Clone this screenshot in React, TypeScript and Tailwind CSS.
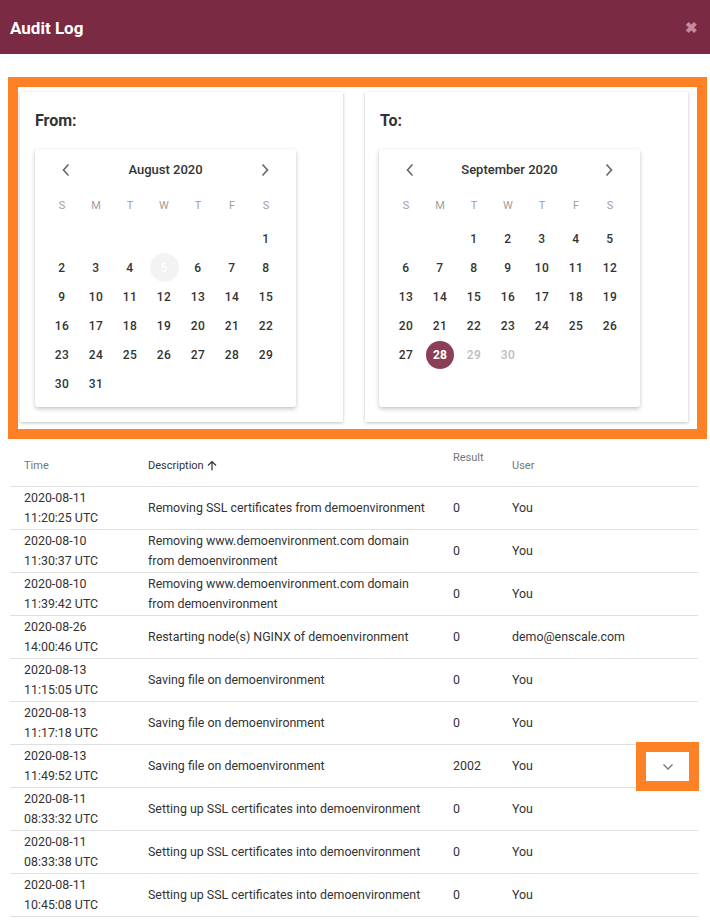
import React from "react";

const weekdays = ["S", "M", "T", "W", "T", "F", "S"];

type CalProps = {
  title: string;
  offset: number;
  days: number;
  ghost?: number;
  selected?: number;
  disabledFrom?: number;
};

function Chevron({ dir }: { dir: "left" | "right" }) {
  return (
    <svg width="10" height="14" viewBox="0 0 10 14" fill="none">
      <path
        d={dir === "left" ? "M7.5 1.5 2.5 7l5 5.5" : "M2.5 1.5 7.5 7l-5 5.5"}
        stroke="#666"
        strokeWidth="1.6"
      />
    </svg>
  );
}

function Calendar({ title, offset, days, ghost, selected, disabledFrom }: CalProps) {
  const cells: (number | null)[] = [];
  for (let i = 0; i < offset; i++) cells.push(null);
  for (let d = 1; d <= days; d++) cells.push(d);

  return (
    <div className="w-[261px] h-[258px] bg-white rounded-[3px] shadow-[0_2px_4px_rgba(0,0,0,0.22),0_0_2px_rgba(0,0,0,0.06)] px-[10px]">
      <div className="h-[41px] flex items-center justify-between px-[16px]">
        <Chevron dir="left" />
        <span className="text-[13px] font-medium text-[#333]">{title}</span>
        <Chevron dir="right" />
      </div>
      <div className="grid grid-cols-7 w-[238px] mt-[2px]">
        {weekdays.map((w, i) => (
          <div key={i} className="h-[29px] flex items-center justify-center text-[11px] text-[#9e9e9e]">
            {w}
          </div>
        ))}
      </div>
      <div className="grid grid-cols-7 w-[238px] mt-[3px]">
        {cells.map((d, i) => {
          if (d === null) return <div key={i} className="h-[29px]" />;
          if (d === ghost)
            return (
              <div key={i} className="h-[29px] flex items-center justify-center">
                <span className="w-[29px] h-[29px] rounded-full bg-[#f3f3f3] text-white text-[12px] font-medium flex items-center justify-center">
                  {d}
                </span>
              </div>
            );
          if (d === selected)
            return (
              <div key={i} className="h-[29px] flex items-center justify-center">
                <span className="w-[28px] h-[28px] rounded-full bg-[#8b3f57] text-white text-[12px] font-bold flex items-center justify-center">
                  {d}
                </span>
              </div>
            );
          const dis = disabledFrom !== undefined && d >= disabledFrom;
          return (
            <div
              key={i}
              className={`h-[29px] flex items-center justify-center text-[12px] font-medium tracking-[0.5px] ${
                dis ? "text-[#bdbdbd]" : "text-[#333]"
              }`}
            >
              {d}
            </div>
          );
        })}
      </div>
    </div>
  );
}

const rows = [
  ["2020-08-11", "11:20:25 UTC", ["Removing SSL certificates from demoenvironment"], "0", "You"],
  ["2020-08-10", "11:30:37 UTC", ["Removing www.demoenvironment.com domain", "from demoenvironment"], "0", "You"],
  ["2020-08-10", "11:39:42 UTC", ["Removing www.demoenvironment.com domain", "from demoenvironment"], "0", "You"],
  ["2020-08-26", "14:00:46 UTC", ["Restarting node(s) NGINX of demoenvironment"], "0", "demo@enscale.com"],
  ["2020-08-13", "11:15:05 UTC", ["Saving file on demoenvironment"], "0", "You"],
  ["2020-08-13", "11:17:18 UTC", ["Saving file on demoenvironment"], "0", "You"],
  ["2020-08-13", "11:49:52 UTC", ["Saving file on demoenvironment"], "2002", "You"],
  ["2020-08-11", "08:33:32 UTC", ["Setting up SSL certificates into demoenvironment"], "0", "You"],
  ["2020-08-11", "08:33:38 UTC", ["Setting up SSL certificates into demoenvironment"], "0", "You"],
  ["2020-08-11", "10:45:08 UTC", ["Setting up SSL certificates into demoenvironment"], "0", "You"],
] as const;

export default function App() {
  return (
    <div className="w-[710px] h-[921px] overflow-hidden bg-white font-['Roboto',sans-serif] text-[#333]">
      {/* header */}
      <div className="h-[54px] bg-[#7a2a42] flex items-center justify-between pl-[10px] pr-[12px] pt-[3px]">
        <h1 className="text-[17px] font-bold text-white">Audit Log</h1>
        <span className="text-[#c48aa0] text-[15px] font-bold leading-none">✖</span>
      </div>

      {/* date range */}
      <div className="mt-[23px] ml-[8px] w-[699px] border-[10px] border-[#ff8126] pl-[2px] pt-[5px] pr-[8px] pb-[7px] flex gap-[22px]">
        <div className="w-[323px] h-[330px] bg-white shadow-[0_1px_3px_rgba(0,0,0,0.25)] pl-[15px] pt-[20px]">
          <div className="text-[16px] font-bold text-[#333] leading-[18px]">From:</div>
          <div className="mt-[19px]">
            <Calendar title="August 2020" offset={6} days={31} ghost={5} />
          </div>
        </div>
        <div className="w-[323px] h-[330px] bg-white shadow-[0_1px_3px_rgba(0,0,0,0.25)] pl-[14px] pt-[20px]">
          <div className="text-[16px] font-bold text-[#333] leading-[18px] pl-[1px]">To:</div>
          <div className="mt-[19px]">
            <Calendar title="September 2020" offset={2} days={30} selected={28} disabledFrom={29} />
          </div>
        </div>
      </div>

      {/* table */}
      <div className="ml-[10px] w-[688px]">
        <div className="h-[48px] border-b border-[#e0e0e0] flex text-[11px] relative">
          <div className="w-[138px] pl-[14px] pt-[19px] text-[#757575]">Time</div>
          <div className="w-[305px] pt-[19px] flex items-start text-[#333]">
            Description
            <svg className="ml-[3px] mt-[2px]" width="10" height="11" viewBox="0 0 10 11" fill="none">
              <path d="M5 10.5V1.5M1 5.5l4-4 4 4" stroke="#333" strokeWidth="1.2" />
            </svg>
          </div>
          <div className="w-[59px] pt-[11px] text-[#757575]">Result</div>
          <div className="pt-[19px] text-[#757575]">User</div>
        </div>
        {rows.map((r, i) => (
          <div key={i} className="h-[43px] border-b border-[#e0e0e0] flex items-center text-[12.4px] leading-[20px] relative">
            <div className="w-[138px] pl-[14px]">
              <div>{r[0]}</div>
              <div>{r[1]}</div>
            </div>
            <div className="w-[305px]">
              {r[2].map((l, j) => (
                <div key={j}>{l}</div>
              ))}
            </div>
            <div className="w-[59px]">{r[3]}</div>
            <div>{r[4]}</div>
            {i === 6 && (
              <div className="absolute top-[-3px] right-[-1px] w-[63px] h-[49px] border-[10px] border-[#ff8126] bg-white flex items-center justify-center">
                <svg width="12" height="8" viewBox="0 0 12 8" fill="none">
                  <path d="M1.5 1.5 6 6l4.5-4.5" stroke="#777" strokeWidth="1.4" />
                </svg>
              </div>
            )}
          </div>
        ))}
      </div>
    </div>
  );
}
